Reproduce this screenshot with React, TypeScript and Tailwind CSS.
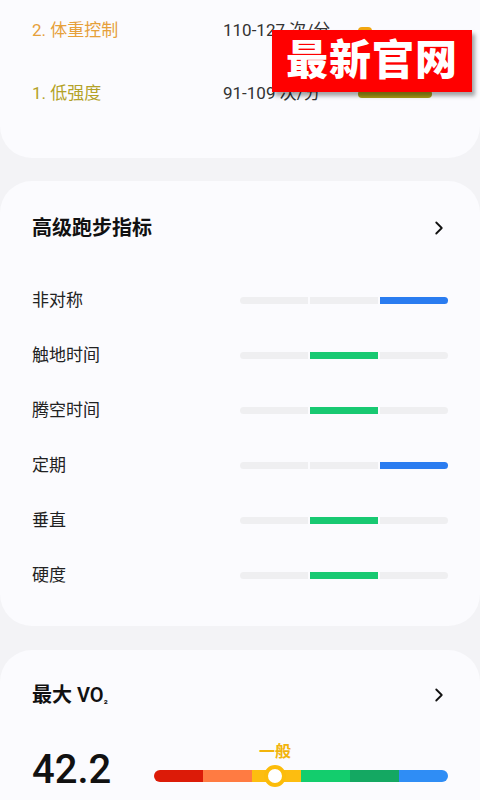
import { ChevronRight } from 'lucide-react'

const FONT = { fontFamily: 'Roboto, "Noto Sans CJK SC", sans-serif' }

// active = index of the coloured segment
const metrics: { label: string; active: number; color: string }[] = [
  { label: '非对称', active: 2, color: 'bg-[#2a7cf0]' },
  { label: '触地时间', active: 1, color: 'bg-[#18c972]' },
  { label: '腾空时间', active: 1, color: 'bg-[#18c972]' },
  { label: '定期', active: 2, color: 'bg-[#2a7cf0]' },
  { label: '垂直', active: 1, color: 'bg-[#18c972]' },
  { label: '硬度', active: 1, color: 'bg-[#18c972]' },
]

const gauge = ['bg-[#dc1b08]', 'bg-[#ff7b42]', 'bg-[#fdbd10]', 'bg-[#13cd6d]', 'bg-[#14a862]', 'bg-[#2f8df5]']

function SegBar({ active, color }: { active: number; color: string }) {
  return (
    <div className="flex w-[208px] gap-[2px]">
      {[0, 1, 2].map(i => (
        <div
          key={i}
          className={[
            'h-[7px] flex-1',
            i === active ? color : 'bg-[#efeff1]',
            i === 0 ? 'rounded-l-full' : '',
            i === 2 ? 'rounded-r-full' : '',
          ].join(' ')}
        />
      ))}
    </div>
  )
}

export default function App() {
  return (
    <div className="relative h-[800px] w-[480px] overflow-hidden bg-[#f3f3f6]" style={FONT}>
      {/* Heart rate zones card (top cut off) */}
      <div className="-mt-[1px] rounded-b-[32px] bg-[#fbfbfe] px-8 pb-[33px]">
        <div className="flex h-[63px] items-center text-[17px]">
          <span className="w-[191px] text-[#e6a03a]">2. 体重控制</span>
          <span className="w-[135px] text-[#333]">110-127 次/分</span>
          <div className="h-[8px] w-[14px] rounded-full bg-[#f2a60f]" />
        </div>
        <div className="flex h-[63px] items-center text-[17px]">
          <span className="w-[191px] text-[#b3a227]">1. 低强度</span>
          <span className="w-[135px] text-[#333]">91-109 次/分</span>
          <div className="h-[8px] w-[74px] rounded-full bg-[#a89b16]" />
        </div>
      </div>

      {/* Advanced running metrics */}
      <div className="mt-[23px] rounded-[32px] bg-[#fbfbfe] px-8 pb-[23px] pt-[33px]">
        <div className="flex h-[28px] items-center justify-between">
          <span className="text-[20px] font-bold text-[#111]">高级跑步指标</span>
          <ChevronRight className="mr-[-2px] h-[22px] w-[22px] text-[#111]" strokeWidth={2} />
        </div>
        <div className="mt-[31px]">
          {metrics.map(m => (
            <div key={m.label} className="flex h-[55px] items-center justify-between">
              <span className="text-[17px] text-[#222]">{m.label}</span>
              <SegBar active={m.active} color={m.color} />
            </div>
          ))}
        </div>
      </div>

      {/* VO2 max */}
      <div className="mt-[24px] rounded-[32px] bg-[#fbfbfe] px-8 pb-[40px] pt-[31px]">
        <div className="flex h-[28px] items-center justify-between">
          <span className="text-[20px] font-semibold text-[#111]">
            最大 VO<span className="text-[11px]">₂</span>
          </span>
          <ChevronRight className="mr-[-2px] h-[22px] w-[22px] text-[#111]" strokeWidth={2} />
        </div>
        <div className="mt-[41px] flex items-end">
          <span className="w-[122px] text-[40px] leading-[40px] font-medium text-[#111]">42.2</span>
          <div className="relative mb-[8px] flex flex-1">
            {gauge.map((c, i) => (
              <div
                key={c}
                className={[
                  'h-[12px] flex-1',
                  c,
                  i === 0 ? 'rounded-l-full' : '',
                  i === gauge.length - 1 ? 'rounded-r-full' : '',
                ].join(' ')}
              />
            ))}
            <span className="absolute -top-[30px] left-[101px] w-[40px] whitespace-nowrap text-center text-[16px] leading-6 font-bold text-[#f2b40c]">
              一般
            </span>
            <div className="absolute -top-[5px] left-[110px] h-[22px] w-[22px] rounded-full border-[4px] border-[#fcbc0a] bg-white" />
          </div>
        </div>
      </div>

      {/* Overlay banner */}
      <div className="absolute left-[272px] top-[30px] flex h-[62px] w-[200px] items-center justify-center bg-[#ff0000] shadow-[3px_4px_4px_rgba(0,0,0,0.35)]">
        <span className="text-[42px] font-black leading-none tracking-[1px] text-white">最新官网</span>
      </div>
    </div>
  )
}
